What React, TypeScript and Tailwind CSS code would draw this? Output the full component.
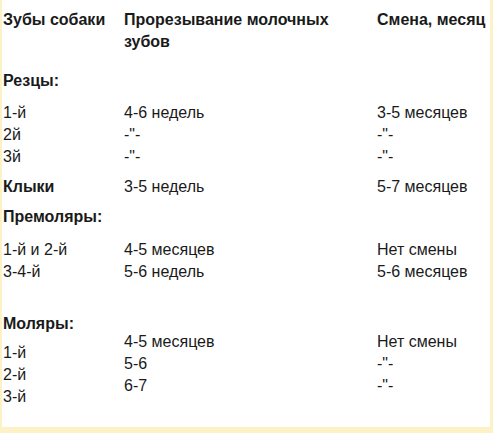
const rows1 = [
  ["1-й", "4-6 недель", "3-5 месяцев"],
  ["2й", "-\"-", "-\"-"],
  ["3й", "-\"-", "-\"-"],
];

export default function App() {
  return (
    <div className="h-[433px] w-[493px] overflow-hidden border-b-[6px] border-l-2 border-r-[3px] border-[#fdf2c6] bg-white font-['Liberation_Sans',Arial,sans-serif] text-[16px] leading-[22px] text-[#1a1a1a]">
      <div className="grid grid-cols-[121px_253px_1fr] pl-px pt-[9px]">
        {/* header */}
        <div className="font-bold">Зубы собаки</div>
        <div className="pr-8 font-bold">Прорезывание молочных зубов</div>
        <div className="whitespace-nowrap font-bold">Смена, месяц</div>

        {/* Резцы */}
        <div className="col-span-3 mt-[17px] font-bold">Резцы:</div>
        {rows1.map((r, i) => (
          <div key={i} className="contents">
            <div className={i === 0 ? "mt-[10px]" : ""}>{r[0]}</div>
            <div className={i === 0 ? "mt-[10px]" : ""}>{r[1]}</div>
            <div className={i === 0 ? "mt-[10px]" : ""}>{r[2]}</div>
          </div>
        ))}

        {/* Клыки */}
        <div className="mt-2 font-bold">Клыки</div>
        <div className="mt-2">3-5 недель</div>
        <div className="mt-2">5-7 месяцев</div>

        {/* Премоляры */}
        <div className="col-span-3 mt-2 font-bold">Премоляры:</div>
        <div className="mt-[11px]">
          <div>1-й и 2-й</div>
          <div>3-4-й</div>
        </div>
        <div className="mt-[11px]">
          <div>4-5 месяцев</div>
          <div>5-6 недель</div>
        </div>
        <div className="mt-[11px]">
          <div>Нет смены</div>
          <div>5-6 месяцев</div>
        </div>

        {/* Моляры */}
        <div className="mt-[30px]">
          <div className="font-bold">Моляры:</div>
          <div className="mt-[7px]">1-й</div>
          <div>2-й</div>
          <div>3-й</div>
        </div>
        <div className="mt-[48px]">
          <div>4-5 месяцев</div>
          <div>5-6</div>
          <div>6-7</div>
        </div>
        <div className="mt-[48px]">
          <div>Нет смены</div>
          <div>-"-</div>
          <div>-"-</div>
        </div>
      </div>
    </div>
  );
}
